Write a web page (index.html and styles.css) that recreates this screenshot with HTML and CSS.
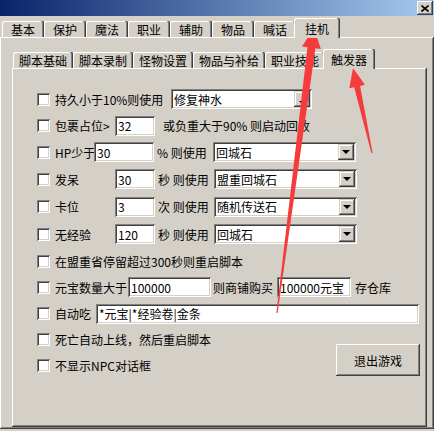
FILE: index.html
```html
<!DOCTYPE html>
<html lang="zh-CN">
<head>
    <meta charset="UTF-8">
    <title>挂机 - 触发器</title>
    <link rel="stylesheet" href="styles.css">
</head>
<body>
    <div class="window">
        <div class="titlebar">
            <button class="close">
                <svg width="8" height="7" viewBox="0 0 8 7"><path d="M0.5 0.5 L7.5 6.5 M7.5 0.5 L0.5 6.5" stroke="#000" stroke-width="1.6" fill="none"/></svg>
            </button>
        </div>

        <div class="tabs main-tabs">
            <div class="tab">基本</div>
            <div class="tab">保护</div>
            <div class="tab">魔法</div>
            <div class="tab">职业</div>
            <div class="tab">辅助</div>
            <div class="tab">物品</div>
            <div class="tab">喊话</div>
            <div class="tab active">挂机</div>
        </div>

        <div class="panel outer">
            <div class="tabs sub-tabs">
                <div class="tab">脚本基础</div>
                <div class="tab">脚本录制</div>
                <div class="tab">怪物设置</div>
                <div class="tab">物品与补给</div>
                <div class="tab">职业技能</div>
                <div class="tab active">触发器</div>
            </div>

            <div class="panel inner">
                <div class="form">
                    <div class="row">
                        <input type="checkbox">
                        <span class="w116">持久小于10%则使用</span>
                        <div class="combo potion"><span class="value">修复神水</span><span class="drop small"></span></div>
                    </div>
                    <div class="row">
                        <input type="checkbox">
                        <span class="w60">包裹占位&gt;</span>
                        <input class="edit num" type="text" value="32">
                        <span class="after">或负重大于90% 则启动回收</span>
                    </div>
                    <div class="row">
                        <input type="checkbox">
                        <span class="w39">HP少于</span>
                        <input class="edit hp" type="text" value="30">
                        <span class="unit">% 则使用</span>
                        <div class="combo"><span class="value">回城石</span><span class="drop"></span></div>
                    </div>
                    <div class="row">
                        <input type="checkbox">
                        <span class="w60">发呆</span>
                        <input class="edit num" type="text" value="30">
                        <span class="unit">秒 则使用</span>
                        <div class="combo"><span class="value">盟重回城石</span><span class="drop"></span></div>
                    </div>
                    <div class="row">
                        <input type="checkbox">
                        <span class="w60">卡位</span>
                        <input class="edit num" type="text" value="3">
                        <span class="unit">次 则使用</span>
                        <div class="combo"><span class="value">随机传送石</span><span class="drop"></span></div>
                    </div>
                    <div class="row">
                        <input type="checkbox">
                        <span class="w60">无经验</span>
                        <input class="edit num" type="text" value="120">
                        <span class="unit">秒 则使用</span>
                        <div class="combo"><span class="value">回城石</span><span class="drop"></span></div>
                    </div>
                    <div class="row">
                        <input type="checkbox">
                        <span>在盟重省停留超过300秒则重启脚本</span>
                    </div>
                    <div class="row">
                        <input type="checkbox">
                        <span class="w73">元宝数量大于</span>
                        <input class="edit gold" type="text" value="100000">
                        <span class="shop">则商铺购买</span>
                        <input class="edit buy" type="text" value="100000元宝">
                        <span class="store">存仓库</span>
                    </div>
                    <div class="row">
                        <input type="checkbox">
                        <span class="w41">自动吃</span>
                        <input class="edit eat" type="text" value="*元宝|*经验卷|金条">
                    </div>

                    <button class="quit">退出游戏</button>

                    <div class="row left">
                        <input type="checkbox">
                        <span>死亡自动上线，然后重启脚本</span>
                    </div>
                    <div class="row left">
                        <input type="checkbox">
                        <span>不显示NPC对话框</span>
                    </div>
                </div>
            </div>
        </div>

        <svg class="marks" viewBox="0 0 434 431">
            <polygon points="314,28 320.85,49.05 315.4,48.35 277.6,313.08 276.4,312.92 307.46,47.32 302.01,46.61"/>
            <polygon points="353,68 364.95,84.8 360.07,85.89 372.59,152.87 371.41,153.13 354.21,87.19 349.33,88.28"/>
        </svg>
    </div>
</body>
</html>
```

FILE: styles.css
```css
:root {
    --face: #d4d0c8;
    --light: #ffffff;
    --shadow: #808080;
    --dark: #404040;
    --raised: inset -1px -1px var(--dark), inset 1px 1px var(--light), inset -2px -2px var(--shadow);
    --sunken: inset 1px 1px var(--shadow), inset -1px -1px var(--light), inset 2px 2px var(--dark), inset -2px -2px var(--face);
}

* {
    box-sizing: border-box;
}

body {
    margin: 0;
    background: var(--face);
    font-family: "Noto Sans CJK SC", "Liberation Sans", sans-serif;
    font-size: 12px;
    color: #000;
}

.window {
    position: relative;
    width: 434px;
    height: 431px;
    overflow: hidden;
}

.titlebar {
    height: 16px;
    margin-bottom: 2px;
    padding-right: 1px;
    display: flex;
    align-items: center;
    justify-content: flex-end;
    background: linear-gradient(to right, #0a246a, #a6caf0);
}

.close {
    width: 16px;
    height: 14px;
    padding: 0;
    border: 0;
    background: var(--face);
    box-shadow: var(--raised);
    display: flex;
    align-items: center;
    justify-content: center;
}

/* tab strips */
.tabs {
    display: flex;
    align-items: flex-end;
    height: 19px;
}

.main-tabs {
    padding-left: 2px;
}

.sub-tabs {
    padding-left: 1px;
}

.tab {
    height: 16px;
    padding: 1px 9px 0;
    line-height: 15px;
    white-space: nowrap;
    background: var(--face);
    border-radius: 2px 2px 0 0;
    box-shadow: inset -1px 0 var(--dark), inset -2px 0 var(--shadow), inset 1px 1px var(--light);
}

.sub-tabs .tab {
    padding: 1px 6px 0;
}

.tabs .tab.active {
    position: relative;
    z-index: 1;
    height: 20px;
    margin: 0 -2px -1px;
    padding: 3px 11px 0;
}

.sub-tabs .tab.active {
    padding: 3px 8px 0;
}

/* panels */
.panel {
    background: var(--face);
    box-shadow: var(--raised);
}

.outer {
    height: 392px;
    padding: 12px 7px 2px 12px;
    display: flex;
    flex-direction: column;
}

.inner {
    flex: 1;
    padding: 18px 0 0 25px;
}

/* form */
.form {
    display: grid;
    grid-template-columns: 1fr auto;
    grid-template-rows: 26px 27px 26px 28px 27px 28px 26px 26px 27px 25px 26px;
}

.row {
    grid-column: 1 / -1;
    display: flex;
    align-items: center;
    white-space: nowrap;
}

.row > * {
    flex-shrink: 0;
}

.row.left {
    grid-column: 1;
}

input[type="checkbox"] {
    appearance: none;
    width: 13px;
    height: 13px;
    margin: 0 5px 0 0;
    background: #fff;
    box-shadow: var(--sunken);
}

.w39 { width: 39px; }
.w41 { width: 41px; }
.w60 { width: 60px; }
.w73 { width: 73px; }
.w116 { width: 116px; }

.edit {
    height: 20px;
    margin: 0;
    padding: 0 0 0 3px;
    border: 0;
    outline: none;
    font: inherit;
    color: #000;
    background: #fff;
    box-shadow: var(--sunken);
}

.num { width: 40px; }
.hp { width: 60px; }
.gold { width: 83px; }
.buy { width: 74px; }
.eat { width: 323px; }

.after {
    margin-left: 8px;
}

.unit {
    width: 59px;
    padding-left: 3px;
}

.shop {
    width: 66px;
    padding-left: 2px;
}

.store {
    margin-left: 4px;
}

.combo {
    width: 143px;
    height: 20px;
    padding: 2px;
    display: flex;
    align-items: center;
    background: #fff;
    box-shadow: var(--sunken);
}

.combo.potion {
    width: 141px;
}

.combo .value {
    flex: 1;
    padding-left: 1px;
}

.drop {
    width: 16px;
    height: 16px;
    display: flex;
    align-items: center;
    justify-content: center;
    background: var(--face);
    box-shadow: inset -1px -1px var(--dark), inset 1px 1px var(--face), inset -2px -2px var(--shadow), inset 2px 2px var(--light);
}

.drop::after {
    content: "";
    border-left: 4px solid transparent;
    border-right: 4px solid transparent;
    border-top: 4px solid #000;
}

.drop.small {
    align-items: flex-end;
    padding-bottom: 3px;
}

.drop.small::after {
    border-width: 3px 3px 0;
}

.quit {
    grid-column: 2;
    grid-row: 10 / span 2;
    align-self: start;
    width: 84px;
    height: 32px;
    margin: 17px 7px 0 0;
    padding: 0;
    border: 0;
    font: inherit;
    color: #000;
    background: var(--face);
    box-shadow: var(--raised);
}

/* red annotation arrows drawn over the dialog */
.marks {
    position: absolute;
    left: 0;
    top: 0;
    width: 434px;
    height: 431px;
    pointer-events: none;
    fill: #f53b3b;
}
```
